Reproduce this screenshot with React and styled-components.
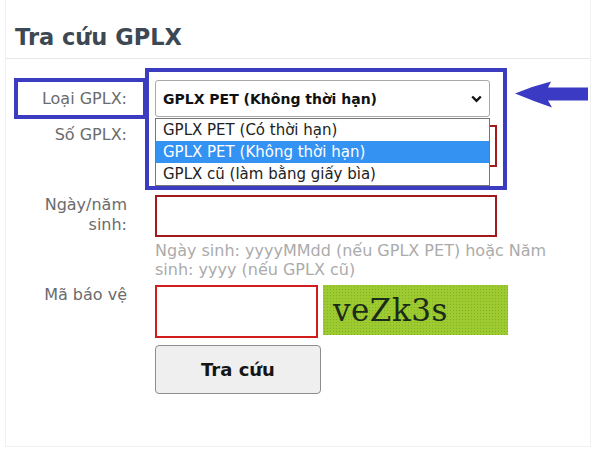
import React from "react";
import styled, { createGlobalStyle } from "styled-components";

const GlobalStyle = createGlobalStyle`
  html, body { margin: 0; padding: 0; background: #ffffff; }
  body { font-family: "DejaVu Sans", Verdana, sans-serif; }
`;

const Panel = styled.div`
  position: relative;
  box-sizing: border-box;
  margin-left: 5px;
  width: 586px;
  height: 447px;
  border: 1px solid #f1f1f1;
  border-top: none;
`;

const Header = styled.div`
  box-sizing: border-box;
  height: 59px;
  padding: 24px 0 0 9px;
  border-bottom: 1px solid #e7e7e7;
`;

const Title = styled.h2`
  margin: 0;
  font-size: 22.5px;
  line-height: 26px;
  font-weight: bold;
  color: #3c4853;
`;

const Form = styled.div`
  display: flex;
  flex-direction: column;
  padding-top: 21px;
`;

const Row = styled.div`
  display: flex;
  align-items: ${(p) => (p.$center ? "center" : "flex-start")};
  margin-top: ${(p) => p.$top || 0}px;
`;

const Label = styled.div`
  position: relative;
  box-sizing: border-box;
  flex: 0 0 95px;
  margin-left: 26px;
  margin-right: 28px;
  text-align: right;
  font-size: 16px;
  line-height: 20px;
  color: #6b6b6b;

  ${(p) =>
    p.$marked &&
    `
    &::before {
      content: "";
      position: absolute;
      left: -18px;
      top: -11px;
      width: 133px;
      height: 41px;
      box-sizing: border-box;
      border: 4px solid #3c3cc0;
    }
  `}
`;

const Field = styled.div`
  position: relative;
  display: flex;
  flex-direction: column;
`;

const Inline = styled.div`
  display: flex;
  gap: 5px;
`;

const Select = styled.div`
  box-sizing: border-box;
  width: 335px;
  height: 37px;
  display: flex;
  align-items: center;
  justify-content: space-between;
  padding: 0 7px 0 7px;
  border: 1px solid #a9a9a9;
  border-radius: 3px;
  background: #fff;
  font-size: 14px;
  font-weight: bold;
  color: #111;
`;

const Menu = styled.div`
  position: absolute;
  z-index: 2;
  left: 0;
  top: 38px;
  box-sizing: border-box;
  width: 335px;
  border: 1px solid #767676;
  background: #fff;
`;

const Option = styled.div`
  height: 22px;
  line-height: 22px;
  padding-left: 7px;
  font-size: 15px;
  color: ${(p) => (p.$active ? "#ffffff" : "#222222")};
  background: ${(p) => (p.$active ? "#3392f2" : "transparent")};
`;

const Frame = styled.div`
  position: absolute;
  z-index: 3;
  left: -10px;
  top: -12px;
  width: 362px;
  height: 122px;
  box-sizing: border-box;
  border: 4px solid #3c3cc0;
  pointer-events: none;
`;

const Pointer = styled.svg`
  position: absolute;
  left: 360px;
  top: 1px;
`;

const Input = styled.div`
  box-sizing: border-box;
  width: ${(p) => p.$w || 342}px;
  height: ${(p) => p.$h || 42}px;
  border: 2px solid ${(p) => p.$tone || "#a01c1c"};
  background: #fff;
`;

const Hint = styled.div`
  width: 405px;
  margin-top: 4px;
  font-size: 16px;
  line-height: 19px;
  color: #ababab;
`;

const Captcha = styled.div`
  box-sizing: border-box;
  width: 185px;
  height: 50px;
  padding-left: 10px;
  display: flex;
  align-items: center;
  background-color: #9bcb2e;
  background-image: radial-gradient(rgba(120, 150, 40, 0.55) 0.8px, transparent 1px);
  background-size: 3px 3px;
  font-family: "DejaVu Serif", "Liberation Serif", serif;
  font-size: 31px;
  color: #1c2a1c;
  letter-spacing: 0.5px;
`;

const Button = styled.button`
  box-sizing: border-box;
  width: 166px;
  height: 49px;
  border: 1px solid #8d8d8d;
  border-radius: 4px;
  background: #efefef;
  font-family: "DejaVu Sans", Verdana, sans-serif;
  font-size: 18px;
  font-weight: bold;
  color: #151515;
  padding: 0;
`;

const Chevron = () => (
  <svg width="11" height="8" viewBox="0 0 11 8">
    <path d="M1.2 1.5 L5.5 5.8 L9.8 1.5" fill="none" stroke="#111" strokeWidth="2.4" />
  </svg>
);

export default function App() {
  return (
    <>
      <GlobalStyle />
      <Panel>
        <Header>
          <Title>Tra cứu GPLX</Title>
        </Header>
        <Form>
          <Row $center>
            <Label $marked>Loại GPLX:</Label>
            <Field>
              <Select>
                <span>GPLX PET (Không thời hạn)</span>
                <Chevron />
              </Select>
              <Menu>
                <Option>GPLX PET (Có thời hạn)</Option>
                <Option $active>GPLX PET (Không thời hạn)</Option>
                <Option>GPLX cũ (làm bằng giấy bìa)</Option>
              </Menu>
              <Frame />
              <Pointer width="73" height="27" viewBox="0 0 73 27">
                <path d="M0 12.5 Q18 5 36 0.5 L33 6.5 L73 6.5 L73 19.5 L33 19.5 L37 26.5 Q18 20 0 12.5 Z" fill="#3a3ac4" />
              </Pointer>
            </Field>
          </Row>
          <Row $top={8}>
            <Label>Số GPLX:</Label>
            <Field>
              <Input />
            </Field>
          </Row>
          <Row $top={28}>
            <Label>Ngày/năm sinh:</Label>
            <Field>
              <Input />
              <Hint>Ngày sinh: yyyyMMdd (nếu GPLX PET) hoặc Năm sinh: yyyy (nếu GPLX cũ)</Hint>
            </Field>
          </Row>
          <Row $top={6}>
            <Label>Mã báo vệ</Label>
            <Field>
              <Inline>
                <Input $w={163} $h={53} $tone="#d21c1c" />
                <Captcha>veZk3s</Captcha>
              </Inline>
            </Field>
          </Row>
          <Row $top={7}>
            <Label />
            <Field>
              <Button>Tra cứu</Button>
            </Field>
          </Row>
        </Form>
      </Panel>
    </>
  );
}
